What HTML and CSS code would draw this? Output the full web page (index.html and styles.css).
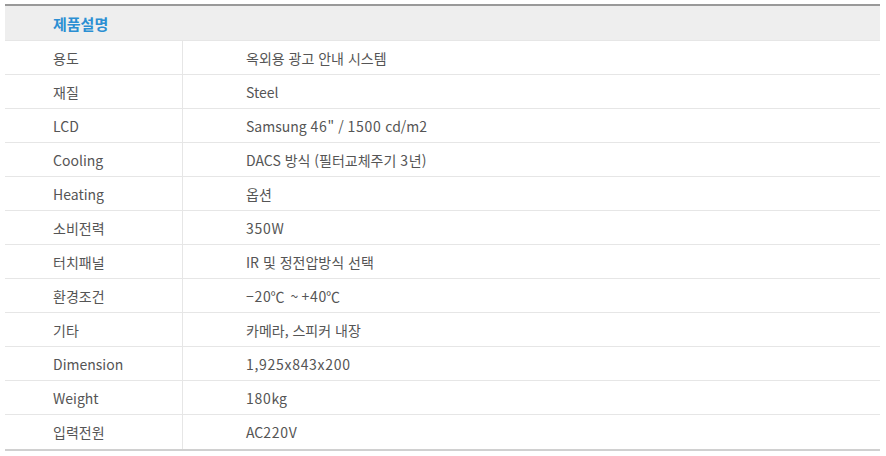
FILE: index.html
```html
<!DOCTYPE html>
<html lang="ko">
<head>
<meta charset="utf-8">
<link rel="stylesheet" href="styles.css">
</head>
<body>
<table class="spec">
  <thead>
    <tr><th colspan="2" class="title">제품설명</th></tr>
  </thead>
  <tbody>
    <tr><td class="label">용도</td><td class="value">옥외용 광고 안내 시스템</td></tr>
    <tr><td class="label">재질</td><td class="value">Steel</td></tr>
    <tr><td class="label">LCD</td><td class="value">Samsung <span class="num">46</span>" / <span class="num">1500</span> cd/m<span class="num">2</span></td></tr>
    <tr><td class="label">Cooling</td><td class="value">DACS 방식 (필터교체주기 <span class="num">3</span>년)</td></tr>
    <tr><td class="label">Heating</td><td class="value">옵션</td></tr>
    <tr><td class="label">소비전력</td><td class="value"><span class="num">350</span>W</td></tr>
    <tr><td class="label">터치패널</td><td class="value">IR 및 정전압방식 선택</td></tr>
    <tr><td class="label">환경조건</td><td class="value"><span class="num">−20</span><span class="fw">℃</span> ~ <span class="num">+40</span><span class="fw">℃</span></td></tr>
    <tr><td class="label">기타</td><td class="value">카메라, 스피커 내장</td></tr>
    <tr><td class="label">Dimension</td><td class="value"><span class="num">1,925x843x200</span></td></tr>
    <tr><td class="label">Weight</td><td class="value"><span class="num">180</span>kg</td></tr>
    <tr><td class="label">입력전원</td><td class="value">AC<span class="num">220</span>V</td></tr>
  </tbody>
</table>
</body>
</html>
```
FILE: styles.css
```css
html, body {
  margin: 0;
  background: #fff;
}
body {
  padding: 4px 6px 0 5px;
  font-family: "Noto Sans CJK KR", "Noto Sans", sans-serif;
}
.spec {
  width: 875px;
  border-collapse: collapse;
  border-top: 2px solid #999;
  border-bottom: 2px solid #d0d0d0;
}
.spec .title {
  background: #eee;
  height: 34px;
  padding: 0 0 0 48px;
  text-align: left;
  font-size: 15px;
  font-weight: 700;
  color: #2b8fd3;
  border-bottom: 1px solid #e6e6e6;
}
.spec td {
  height: 33px;
  padding: 0;
  font-size: 14px;
  color: #555;
  border-bottom: 1px solid #e6e6e6;
}
.spec tbody tr:last-child td {
  border-bottom: none;
  height: 34px;
}
.spec .label {
  width: 129px;
  padding-left: 48px;
  border-right: 1px solid #e6e6e6;
}
.spec .value {
  padding-left: 63px;
}
.num {
  letter-spacing: 0.7px;
}
.fw {
  display: inline-block;
  width: 17px;
  text-align: left;
  margin-left: -1px;
}
```
